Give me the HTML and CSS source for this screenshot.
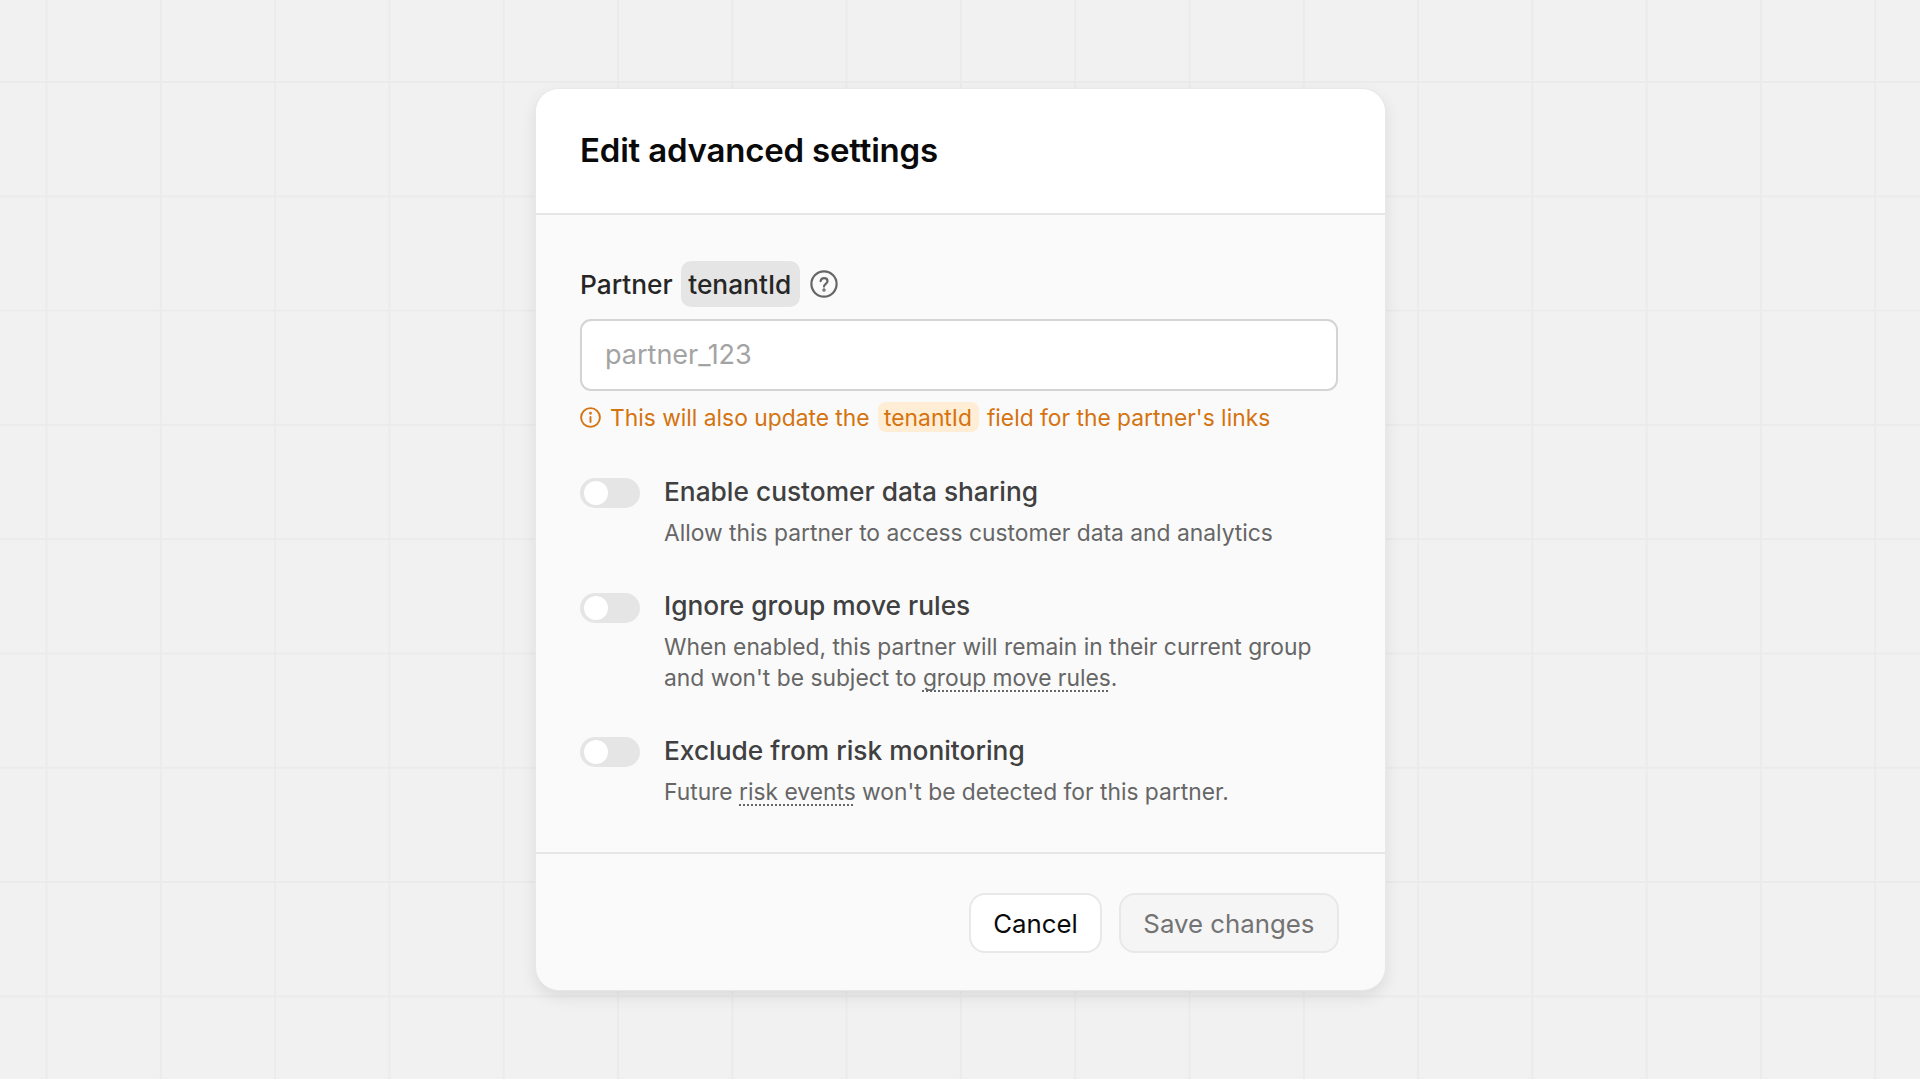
FILE: index.html
```html
<!DOCTYPE html>
<html lang="en">
<head>
<meta charset="utf-8">
<title>Edit advanced settings</title>
<link rel="stylesheet" href="styles.css">
</head>
<body>
<div class="modal">
  <header class="modal-head"><h1 class="modal-title">Edit advanced settings</h1></header>
  <div class="modal-body">
    <div class="label-row">
      <span class="label-text">Partner</span>
      <code class="chip">tenantId</code>
      <svg class="help-icon" viewBox="0 0 28 28" fill="none" stroke="#666" stroke-width="2.2" stroke-linecap="round"><circle cx="14" cy="14" r="12.6"/><path d="M10.6 11.2c.3-1.9 1.7-3 3.5-3 1.9 0 3.4 1.2 3.4 3 0 2.6-3.5 2.8-3.5 5.4"/><circle cx="14" cy="20" r=".6" fill="#666"/></svg>
    </div>
    <div class="input"><span class="placeholder">partner_123</span></div>
    <div class="note">
      <svg class="note-icon" viewBox="0 0 21 21" fill="none" stroke="#d4730f" stroke-width="1.9" stroke-linecap="round"><circle cx="10.5" cy="10.5" r="9.4"/><path d="M10.5 10v5"/><circle cx="10.5" cy="6.3" r=".5" fill="#d4730f"/></svg>
      <span>This will also update the</span><span class="chip-note">tenantId</span><span>field for the partner's links</span>
    </div>
    <div class="setting">
      <span class="toggle"><span class="knob"></span></span>
      <div class="setting-text">
        <div class="setting-title">Enable customer data sharing</div>
        <p class="setting-desc">Allow this partner to access customer data and analytics</p>
      </div>
    </div>
    <div class="setting">
      <span class="toggle"><span class="knob"></span></span>
      <div class="setting-text">
        <div class="setting-title">Ignore group move rules</div>
        <p class="setting-desc">When enabled, this partner will remain in their current group<br>and won't be subject to <span class="dotted">group move rules</span>.</p>
      </div>
    </div>
    <div class="setting">
      <span class="toggle"><span class="knob"></span></span>
      <div class="setting-text">
        <div class="setting-title">Exclude from risk monitoring</div>
        <p class="setting-desc">Future <span class="dotted">risk events</span> won't be detected for this partner.</p>
      </div>
    </div>
  </div>
  <footer class="modal-foot">
    <button class="btn btn-cancel">Cancel</button>
    <button class="btn btn-save">Save changes</button>
  </footer>
</div>
</body>
</html>
```
FILE: styles.css
```css
* { box-sizing: border-box; }
html, body { margin: 0; height: 100%; }
body {
  font-family: Inter, "Liberation Sans", sans-serif;
  background-color: #f1f1f1;
  background-image:
    linear-gradient(90deg, #ebebeb 2px, transparent 2px),
    linear-gradient(180deg, #ebebeb 2px, transparent 2px);
  background-size: 114.3px 100%, 100% 114.3px;
  background-position: 45.5px 0, 0 81px;
  padding-top: 88px;
  overflow: hidden;
}
.modal {
  width: 851px;
  height: 903px;
  margin-left: 535px;
  background: #fafafa;
  border: 1px solid #e8e8e8;
  border-radius: 24px;
  box-shadow: 0 6px 16px rgba(0,0,0,.09);
  display: flex;
  flex-direction: column;
  overflow: hidden;
}
.modal-head {
  background: #fff;
  height: 126px;
  border-bottom: 2px solid #e6e6e6;
  padding: 0 44px 2px;
  display: flex;
  align-items: center;
}
.modal-title { margin: 0; font-size: 33px; font-weight: 560; color: #0a0a0a; letter-spacing: -0.2px; }
.modal-body { flex: 1; padding: 46px 44px 0; }
.label-row { display: flex; align-items: center; gap: 8.5px; height: 46px; }
.label-text { font-size: 26.3px; font-weight: 500; color: #262626; }
.chip {
  font-family: inherit; font-size: 26.3px; font-weight: 500; color: #262626;
  background: #e5e5e5; border-radius: 10px; padding: 0 9px 0 7px; height: 46px;
  display: flex; align-items: center;
}
.help-icon { width: 28px; height: 28px; margin-left: 1px; }
.input {
  margin-top: 11.5px; height: 72px; width: 758px;
  background: #fff; border: 2px solid #d4d4d4; border-radius: 11px;
  padding: 0 23px; display: flex; align-items: center;
}
.placeholder { font-size: 27px; color: #a3a3a3; }
.note {
  margin-top: 11.5px; display: flex; align-items: center; height: 30px;
  font-size: 22.8px; color: #d4730f;
}
.note-icon { width: 21px; height: 21px; margin-right: 9px; }
.chip-note { background: #ffedd5; border-radius: 8px; padding: 0 7px 0 6px; height: 30px; display: flex; align-items: center; margin: 0 8px 0 8.5px; }
.setting { display: flex; gap: 24px; margin-top: 40px; }
.note + .setting { margin-top: 42.2px; }
.toggle { width: 60px; height: 30px; border-radius: 15px; background: #e5e5e5; padding: 3px 4px; margin-top: 4.2px; flex: none; }
.knob { display: block; width: 24px; height: 24px; border-radius: 50%; background: #fff; }
.setting-title { font-size: 26.3px; font-weight: 500; color: #404040; line-height: 36px; }
.setting-desc { margin: 7.6px 0 0; font-size: 22.8px; color: #666; line-height: 30.6px; }
.dotted { text-decoration: underline dotted #666 2px; text-underline-offset: 5px; text-decoration-skip-ink: none; }
.modal-foot {
  height: 138px; border-top: 2px solid #e6e6e6; padding: 39px 46px 0 44px;
  display: flex; justify-content: flex-end; align-items: flex-start; gap: 16.5px;
}
.btn { height: 60px; border-radius: 16px; font-family: inherit; font-size: 25.8px; padding: 0 22.5px; }
.btn-cancel { background: #fff; color: #0a0a0a; border: 2px solid #e8e8e8; }
.btn-save { background: #f5f5f5; color: #737373; border: 2px solid #e8e8e8; }
```
